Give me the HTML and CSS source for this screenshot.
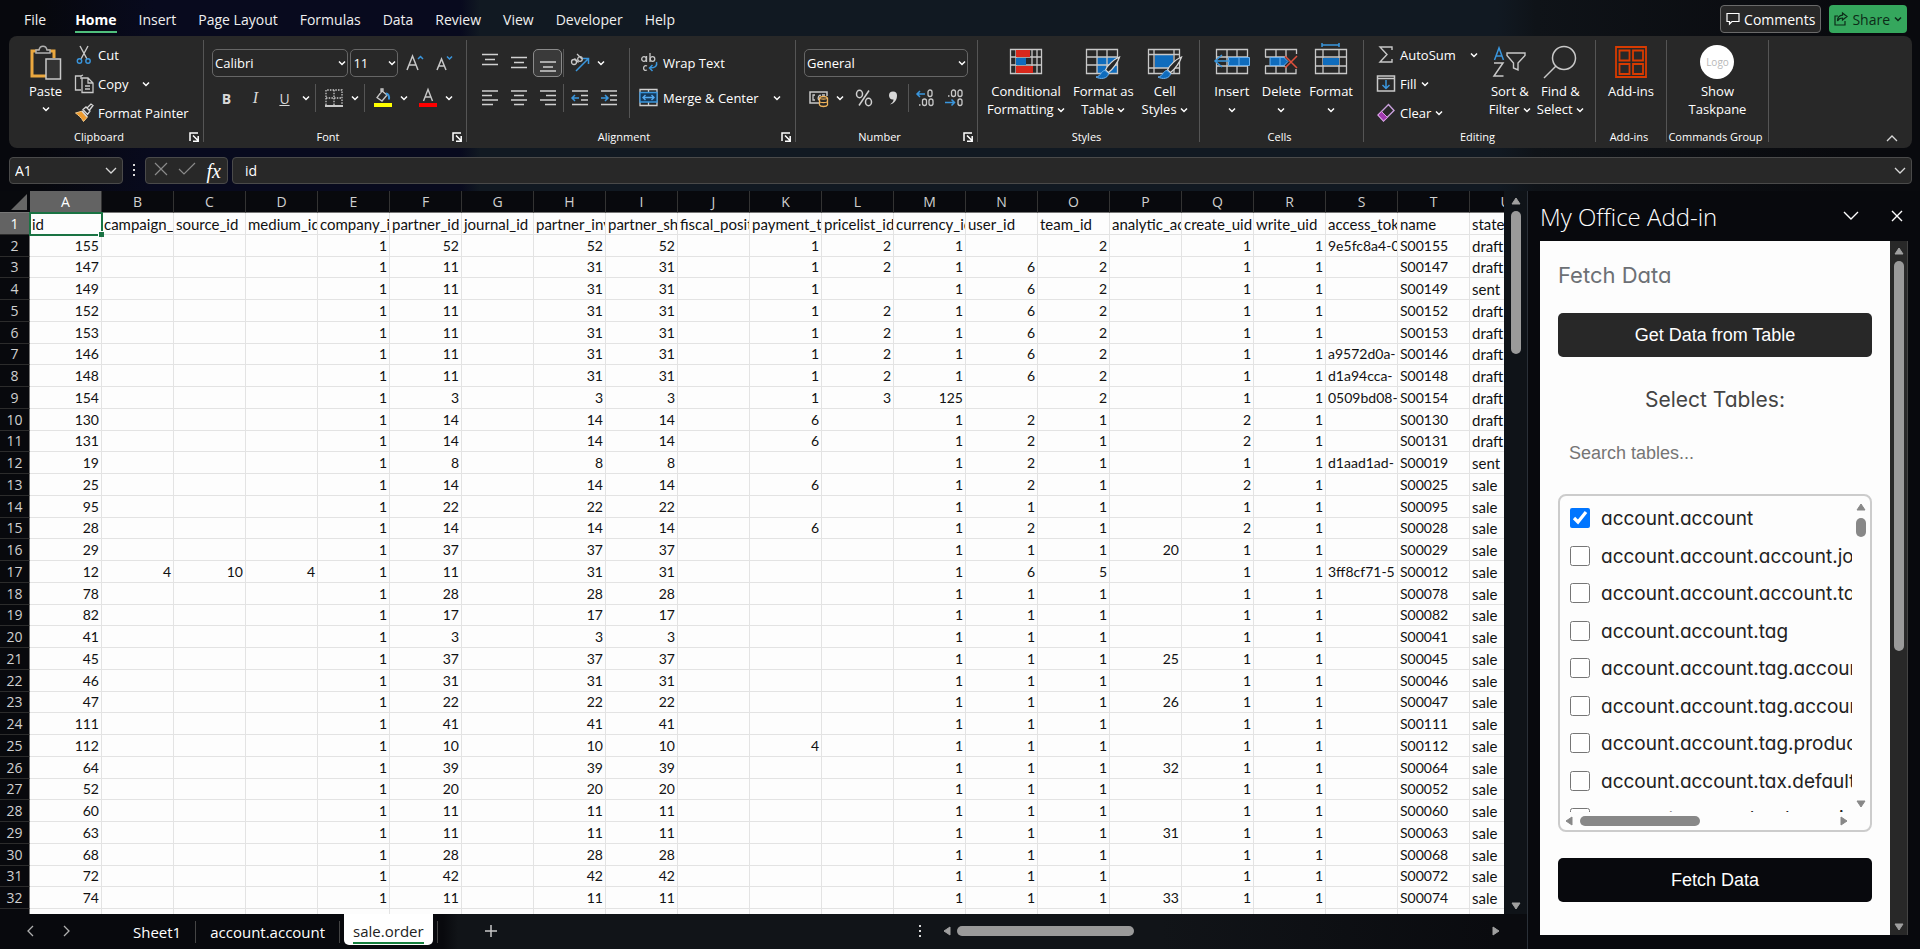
FILE: index.html
```html
<!DOCTYPE html>
<html lang="en">
<head>
    <meta charset="UTF-8">
    <meta name="viewport" content="width=device-width, initial-scale=1.0">
    <title>sale.order</title>
    <link rel="stylesheet" href="styles.css">
</head>
<body>

<svg class="sprite" aria-hidden="true">
    <symbol id="chev" viewBox="0 0 8 8"><path d="M1 2.5l3 3 3-3" fill="none" stroke="currentColor" stroke-width="1.5"/></symbol>
    <symbol id="launch" viewBox="0 0 10 10"><path d="M9 1H1v8M4 3.5l5 5M9.2 4v5.2H4" fill="none" stroke="currentColor" stroke-width="1.5"/></symbol>
    <symbol id="tri" viewBox="0 0 10 8"><path d="M5 1l4 6H1z" fill="currentColor" stroke="currentColor" stroke-linejoin="round"/></symbol>
    <symbol id="brush" viewBox="0 0 26 24">
        <path d="M24.5 1c-5 2-12 8-14 13l3 2.5C18 13 23 6 24.5 1z" fill="#282828" stroke="#d8d8d8" stroke-width="1.3"/>
        <path d="M10 14.5c-4 0-4 6-9 6.5 4 2.5 12 2 12.5-3.5z" fill="#0f6cbd" stroke="#6ab0ee"/>
    </symbol>
</svg>

<header class="menubar">
    <nav class="tabs">
        <a href="#" class="tab tab-file">File</a>
        <a href="#" class="tab active">Home</a>
        <a href="#" class="tab">Insert</a>
        <a href="#" class="tab">Page Layout</a>
        <a href="#" class="tab">Formulas</a>
        <a href="#" class="tab">Data</a>
        <a href="#" class="tab">Review</a>
        <a href="#" class="tab">View</a>
        <a href="#" class="tab">Developer</a>
        <a href="#" class="tab">Help</a>
    </nav>
    <div class="menubar-right">
        <button class="comments">
            <svg width="14" height="14" viewBox="0 0 14 14"><path d="M1 1.5h12v8H6L3.5 12V9.5H1z" fill="none" stroke="#fff" stroke-width="1.2"/></svg>
            Comments
        </button>
        <button class="share">
            <svg width="14" height="14" viewBox="0 0 14 14"><path d="M4 4H1v9h10V9M8.5 1l4.5 3.5L8.5 8V6C6 6 4.5 7 3.5 9c0-3 2-5.5 5-5.8z" fill="none" stroke="#0c2a18" stroke-width="1.2"/></svg>
            Share
            <svg class="chev"><use href="#chev"/></svg>
        </button>
    </div>
</header>

<section class="ribbon">
    <div class="group g-clipboard">
        <div class="group-body">
            <button class="big paste">
                <svg width="32" height="36" viewBox="0 0 32 36">
                    <path d="M9 6H2v25h14M18 6h6v7" fill="none" stroke="#eba83f" stroke-width="3"/>
                    <path d="M6 8V5h3c1-5 7-5 8 0h3v3z" fill="#282828" stroke="#b0b0b0" stroke-width="1.5"/>
                    <rect x="16" y="14" width="14.5" height="20" fill="#333" stroke="#c8c8c8" stroke-width="1.5"/>
                </svg>
                <span>Paste</span>
                <svg class="chev"><use href="#chev"/></svg>
            </button>
            <div class="stack">
                <button class="row-btn">
                    <svg width="20" height="20" viewBox="0 0 20 20"><path d="M6 1l7 13M14 1L7 14" stroke="#c8c8c8" stroke-width="1.4"/><circle cx="5.5" cy="16" r="2.2" fill="none" stroke="#3a96dd" stroke-width="1.4"/><circle cx="14" cy="16" r="2.2" fill="none" stroke="#3a96dd" stroke-width="1.4"/></svg>
                    Cut
                </button>
                <button class="row-btn">
                    <svg width="20" height="20" viewBox="0 0 20 20"><path d="M7 16H1.5V2H7M7 5V2l2-1" fill="none" stroke="#c8c8c8" stroke-width="1.3"/><path d="M8 4h6l5 5v9.5H8zM14 4v5h5M11 12h5M11 15h5" fill="none" stroke="#c8c8c8" stroke-width="1.3"/></svg>
                    Copy
                    <svg class="chev chev-far"><use href="#chev"/></svg>
                </button>
                <button class="row-btn">
                    <svg width="20" height="20" viewBox="0 0 20 20"><path d="M1.5 10l7-2 5 6-4 4.5C7 14 4 12 1.5 10z" fill="#ed9a2d" stroke="#f3c98a"/><path d="M8 8l5 6M9 6.5l3-2.5 4 4-2.5 3.5zM13 5l4-4 2 1.5-3.5 4.5" fill="#282828" stroke="#d8d8d8" stroke-width="1.3"/></svg>
                    Format Painter
                </button>
            </div>
        </div>
        <div class="group-label"><span>Clipboard</span><button class="launch" aria-label="Clipboard settings"><svg width="10" height="10"><use href="#launch"/></svg></button></div>
    </div>

    <div class="group g-font">
        <div class="group-body rows">
            <div class="line">
                <span class="picker font-name"><select aria-label="Font"><option>Calibri</option></select><svg class="chev"><use href="#chev"/></svg></span>
                <span class="picker font-size"><select aria-label="Font size"><option>11</option></select><svg class="chev"><use href="#chev"/></svg></span>
                <button class="tool" aria-label="Increase font size"><svg width="18" height="18" viewBox="0 0 18 18"><path d="M1 16L6.5 2 12 16M3 11h7" fill="none" stroke="#c8c8c8" stroke-width="1.5"/><path d="M12 5l2.5-2.5L17 5" fill="none" stroke="#3a96dd" stroke-width="1.5"/></svg></button>
                <button class="tool" aria-label="Decrease font size"><svg width="18" height="18" viewBox="0 0 18 18"><path d="M2 16L6.5 5 11 16M3.5 12h6" fill="none" stroke="#c8c8c8" stroke-width="1.5"/><path d="M12 2.5L14.5 5 17 2.5" fill="none" stroke="#3a96dd" stroke-width="1.5"/></svg></button>
            </div>
            <div class="line">
                <button class="tool letter"><b>B</b></button>
                <button class="tool letter"><i>I</i></button>
                <button class="tool letter"><u>U</u></button>
                <button class="drop" aria-label="Underline options"><svg class="chev"><use href="#chev"/></svg></button>
                <span class="sep gap"></span>
                <button class="tool" aria-label="Borders"><svg width="18" height="18" viewBox="0 0 18 18"><path d="M1 16V1h16v15M9 1v15M1 9h16" fill="none" stroke="#c8c8c8" stroke-width="1.3" stroke-dasharray="1.5 1.2"/><path d="M0 17h18" stroke="#fff" stroke-width="1.5"/></svg></button>
                <button class="drop" aria-label="Border options"><svg class="chev"><use href="#chev"/></svg></button>
                <span class="sep gap"></span>
                <button class="tool" aria-label="Fill color"><svg width="18" height="18" viewBox="0 0 18 18"><path d="M8 2L3 8.5 8 12l5-6zM7 4V0h2v3" fill="none" stroke="#c8c8c8" stroke-width="1.3"/><path d="M12 4.5c2 0 3.5 2 3 6" fill="none" stroke="#3a96dd" stroke-width="2"/><path d="M0 14h18v4H0z" fill="#ff0"/></svg></button>
                <button class="drop push" aria-label="Fill options"><svg class="chev"><use href="#chev"/></svg></button>
                <button class="tool" aria-label="Font color"><svg width="18" height="18" viewBox="0 0 18 18"><path d="M4.5 12L9 .5 13.5 12M6 8h6" fill="none" stroke="#c8c8c8" stroke-width="1.4"/><path d="M0 14h18v4H0z" fill="#f00"/></svg></button>
                <button class="drop" aria-label="Font color options"><svg class="chev"><use href="#chev"/></svg></button>
            </div>
        </div>
        <div class="group-label"><span>Font</span><button class="launch" aria-label="Font settings"><svg width="10" height="10"><use href="#launch"/></svg></button></div>
    </div>

    <div class="group g-align">
        <div class="group-body">
            <div class="rows">
                <div class="line">
                    <button class="tool" aria-label="Top align"><svg width="18" height="18" viewBox="0 0 18 18"><path d="M1 .5h16M4 5.5h10M1 10.5h16" stroke="#d0d0d0" stroke-width="1.3"/></svg></button>
                    <button class="tool" aria-label="Middle align"><svg width="18" height="18" viewBox="0 0 18 18"><path d="M1 3.5h16M4 8.5h10M1 13.5h16" stroke="#d0d0d0" stroke-width="1.3"/></svg></button>
                    <button class="tool pressed" aria-label="Bottom align"><svg width="18" height="18" viewBox="0 0 18 18"><path d="M1 8h16M4 13h10M1 17h16" stroke="#d0d0d0" stroke-width="1.3"/></svg></button>
                    <span class="sep"></span>
                    <button class="tool" aria-label="Orientation"><svg width="20" height="20" viewBox="0 0 20 20"><g fill="none" stroke="#c8c8c8" stroke-width="1.3"><circle cx="4" cy="9" r="2.5"/><path d="M4.5 5.5l4 4M7 1l5 5"/><circle cx="10" cy="6" r="2.3"/></g><path d="M6 18L18 6M13 5.5h5.5V11" fill="none" stroke="#3a96dd" stroke-width="1.5"/></svg></button>
                    <button class="drop" aria-label="Orientation options"><svg class="chev"><use href="#chev"/></svg></button>
                </div>
                <div class="line">
                    <button class="tool" aria-label="Align left"><svg width="18" height="18" viewBox="0 0 18 18"><path d="M1 2h16M1 6.5h10M1 11h16M1 15.5h11" stroke="#d0d0d0" stroke-width="1.3"/></svg></button>
                    <button class="tool" aria-label="Center"><svg width="18" height="18" viewBox="0 0 18 18"><path d="M1 2h16M4 6.5h10M1 11h16M4 15.5h10" stroke="#d0d0d0" stroke-width="1.3"/></svg></button>
                    <button class="tool" aria-label="Align right"><svg width="18" height="18" viewBox="0 0 18 18"><path d="M1 2h16M7 6.5h10M1 11h16M6 15.5h11" stroke="#d0d0d0" stroke-width="1.3"/></svg></button>
                    <span class="sep"></span>
                    <button class="tool" aria-label="Decrease indent"><svg width="18" height="18" viewBox="0 0 18 18"><path d="M1 2h16M10 6.5h7M10 11h7M1 15.5h16" stroke="#d0d0d0" stroke-width="1.3"/><path d="M8 9H1.5M4 6L1 9l3 3" fill="none" stroke="#3a96dd" stroke-width="1.5"/></svg></button>
                    <button class="tool" aria-label="Increase indent"><svg width="18" height="18" viewBox="0 0 18 18"><path d="M1 2h16M10 6.5h7M10 11h7M1 15.5h16" stroke="#d0d0d0" stroke-width="1.3"/><path d="M1 9h6.5M5 6l3 3-3 3" fill="none" stroke="#3a96dd" stroke-width="1.5"/></svg></button>
                </div>
            </div>
            <span class="sep tall"></span>
            <div class="rows">
                <button class="row-btn wide">
                    <svg width="20" height="20" viewBox="0 0 20 20"><g fill="none" stroke="#c8c8c8" stroke-width="1.3"><circle cx="5" cy="6" r="2.3"/><path d="M7.5 3v6M11 0v9M8 13c-4-2-5 6 0 4"/><circle cx="13.5" cy="6" r="2.3"/></g><path d="M17.5 9c1 4-1 6-7 6M13.5 12l-3 3 3 3" fill="none" stroke="#3a96dd" stroke-width="1.5"/></svg>
                    Wrap Text
                </button>
                <button class="row-btn wide">
                    <svg width="20" height="20" viewBox="0 0 20 20"><path d="M1 1.5h17v16H1zM9.5 1.5v16" fill="none" stroke="#d0d0d0" stroke-width="1.3"/><path d="M1 4.5h17V14H1z" fill="#143a5c" stroke="#3a96dd" stroke-width="1.3"/><path d="M4 9.5h11M6.5 7L4 9.5 6.5 12M12.5 7L15 9.5 12.5 12" fill="none" stroke="#55aaf0" stroke-width="1.4"/></svg>
                    Merge &amp; Center
                    <svg class="chev chev-far"><use href="#chev"/></svg>
                </button>
            </div>
        </div>
        <div class="group-label"><span>Alignment</span><button class="launch" aria-label="Alignment settings"><svg width="10" height="10"><use href="#launch"/></svg></button></div>
    </div>

    <div class="group g-number">
        <div class="group-body rows">
            <div class="line">
                <span class="picker number-format"><select aria-label="Number format"><option>General</option></select><svg class="chev"><use href="#chev"/></svg></span>
            </div>
            <div class="line">
                <button class="tool" aria-label="Accounting format"><svg width="20" height="18" viewBox="0 0 20 18"><path d="M10 14H1V3h17v4" fill="none" stroke="#c8c8c8" stroke-width="1.5"/><path d="M6 6H4v5h2M12 6.5c-3-1.500-4 5.500-1 4.500M13 6h3" fill="none" stroke="#c8c8c8" stroke-width="1.3"/><path d="M10.5 9v7c1 2 7 2 8 0V9c-1-2-7-2-8 0zM10.5 9c1 1.5 7 1.5 8 0M10.5 12.5c1 1.5 7 1.5 8 0" fill="#282828" stroke="#f0b45c" stroke-width="1.3"/></svg></button>
                <button class="drop push" aria-label="Accounting options"><svg class="chev"><use href="#chev"/></svg></button>
                <button class="tool" aria-label="Percent style"><svg width="18" height="18" viewBox="0 0 18 18"><g fill="none" stroke="#d0d0d0" stroke-width="1.5"><ellipse cx="4.5" cy="5" rx="3" ry="3.7"/><ellipse cx="13.5" cy="13" rx="3" ry="3.7"/><path d="M14 1.5L4 16.5"/></g></svg></button>
                <button class="tool" aria-label="Comma style"><svg width="18" height="18" viewBox="0 0 18 18"><path d="M5 6.5a4 4 0 1 1 8 0c0 5-3 8-7 9 2-1.500 3.500-3 3.500-5C7 11 5 9 5 6.500z" fill="#d8d8d8"/></svg></button>
                <span class="sep"></span>
                <button class="tool" aria-label="Increase decimal"><svg width="20" height="20" viewBox="0 0 20 20"><g fill="none" stroke="#c8c8c8" stroke-width="1.3"><rect x="13" y="2" width="4" height="6.5" rx="2"/><rect x="7.5" y="11" width="4" height="6.5" rx="2"/><rect x="14" y="11" width="4" height="6.5" rx="2"/></g><path d="M4 17h1.5" stroke="#c8c8c8" stroke-width="1.5"/><path d="M10 6H2M5 3L2 6l3 3" fill="none" stroke="#3a96dd" stroke-width="1.5"/></svg></button>
                <button class="tool" aria-label="Decrease decimal"><svg width="20" height="20" viewBox="0 0 20 20"><g fill="none" stroke="#c8c8c8" stroke-width="1.3"><rect x="7.5" y="2" width="4" height="6.5" rx="2"/><rect x="14" y="2" width="4" height="6.5" rx="2"/><rect x="14" y="11" width="4" height="6.5" rx="2"/></g><path d="M4 8h1.5" stroke="#c8c8c8" stroke-width="1.5"/><path d="M1 14.5h9M7.5 11.5l3 3-3 3" fill="none" stroke="#3a96dd" stroke-width="1.5"/></svg></button>
            </div>
        </div>
        <div class="group-label"><span>Number</span><button class="launch" aria-label="Number settings"><svg width="10" height="10"><use href="#launch"/></svg></button></div>
    </div>

    <div class="group g-styles">
        <div class="group-body">
            <button class="big">
                <svg width="36" height="36" viewBox="0 0 36 36"><path d="M2.5 4.5h31v24h-31zM8 4v25M24 4v25M29 4v25M2 12h32M2 20h32" fill="none" stroke="#c8c8c8" stroke-width="1.3"/><path d="M8 5h14v7H8zM8 21h17v7H8z" fill="#d8281c"/><path d="M8 13h10v7H8z" fill="#0f6cbd"/></svg>
                <span>Conditional<br>Formatting <svg class="chev"><use href="#chev"/></svg></span>
            </button>
            <button class="big">
                <svg width="36" height="36" viewBox="0 0 36 36"><path d="M12 12h20v16H12z" fill="#0f6cbd"/><path d="M1.5 4.5h31v24h-31zM12 4v25M22 4v25M1 12h32M1 20h32" fill="none" stroke="#c8c8c8" stroke-width="1.3"/><use href="#brush" x="10" y="11" width="26" height="24"/></svg>
                <span>Format as<br>Table <svg class="chev"><use href="#chev"/></svg></span>
            </button>
            <button class="big">
                <svg width="36" height="36" viewBox="0 0 36 36"><path d="M8 10h18v13H8z" fill="#0f6cbd"/><path d="M1.5 4.5h31v24h-31zM7 4v25M27 4v25M1 9.5h32M1 23h32" fill="none" stroke="#c8c8c8" stroke-width="1.3"/><use href="#brush" x="10" y="11" width="26" height="24"/></svg>
                <span>Cell<br>Styles <svg class="chev"><use href="#chev"/></svg></span>
            </button>
        </div>
        <div class="group-label"><span>Styles</span></div>
    </div>

    <div class="group g-cells">
        <div class="group-body">
            <button class="big">
                <svg width="36" height="36" viewBox="0 0 36 36"><path d="M2.5 4.5h31v24h-31zM13 4v25M23 4v25M2 12h32M2 21h32" fill="none" stroke="#c8c8c8" stroke-width="1.3"/><path d="M14.5 12.5h21v8h-21zM25 12v8" fill="#0f6cbd" stroke="#6ab0ee"/><path d="M16 16H1M8 10l-7 6 7 6" fill="none" stroke="#3a96dd" stroke-width="1.5"/></svg>
                <span>Insert<br><svg class="chev"><use href="#chev"/></svg></span>
            </button>
            <button class="big">
                <svg width="36" height="36" viewBox="0 0 36 36"><path d="M2.5 12V4.5h31V9M33 24v4.5H2.5V21M13 4v8M23 4v8M13 21v8M23 21v8M2 12h20M2 21h20" fill="none" stroke="#c8c8c8" stroke-width="1.3"/><path d="M7 12.5h14l4 4-4 4H7zM17 12v8" fill="#0f6cbd" stroke="#6ab0ee"/><path d="M22 11l12 12M34 11L22 23" stroke="#e0503c" stroke-width="1.5"/></svg>
                <span>Delete<br><svg class="chev"><use href="#chev"/></svg></span>
            </button>
            <button class="big">
                <svg width="36" height="36" viewBox="0 0 36 36"><path d="M2.5 4.5h31v24h-31zM10 4v25M26 4v25M2 12h32M2 21h32" fill="none" stroke="#c8c8c8" stroke-width="1.3"/><path d="M10 13h16v7H10z" fill="#0f6cbd"/><path d="M9 0h17M9-2v4M26-2v4" stroke="#3a96dd" stroke-width="1.5"/></svg>
                <span>Format<br><svg class="chev"><use href="#chev"/></svg></span>
            </button>
        </div>
        <div class="group-label"><span>Cells</span></div>
    </div>

    <div class="group g-editing">
        <div class="group-body">
            <div class="stack">
                <button class="row-btn">
                    <svg width="20" height="20" viewBox="0 0 20 20"><path d="M16 5V2H4l7 7.5L4 17h12v-3" fill="none" stroke="#c8c8c8" stroke-width="1.4"/></svg>
                    AutoSum
                    <svg class="chev chev-far"><use href="#chev"/></svg>
                </button>
                <button class="row-btn">
                    <svg width="20" height="20" viewBox="0 0 20 20"><path d="M1.5 2h17v15h-17zM1.5 4.5h17" fill="none" stroke="#c8c8c8" stroke-width="1.5"/><path d="M10 6v8.5M6.5 11l3.5 3.5 3.5-3.5" fill="none" stroke="#3a96dd" stroke-width="1.5"/></svg>
                    Fill
                    <svg class="chev"><use href="#chev"/></svg>
                </button>
                <button class="row-btn">
                    <svg width="20" height="20" viewBox="0 0 20 20"><path d="M2 12L12.5 1.5l5.5 6L7.5 18z" fill="none" stroke="#c9a0dc" stroke-width="1.4"/><path d="M2 12l3.5-3.5 6 6L7.5 18z" fill="#a23bb0" stroke="#d9a0e0"/></svg>
                    Clear
                    <svg class="chev"><use href="#chev"/></svg>
                </button>
            </div>
            <button class="big">
                <svg width="36" height="36" viewBox="0 0 36 36"><path d="M2.5 15L7 3l4.500 12M4 11h6" fill="none" stroke="#3a96dd" stroke-width="1.5"/><path d="M2 18h9L2 31h9.5" fill="none" stroke="#c8c8c8" stroke-width="1.5"/><path d="M15 8h18v2.5L26 18v7l-4.500-2v-5L15 10.500z" fill="none" stroke="#c8c8c8" stroke-width="1.4"/></svg>
                <span>Sort &amp;<br>Filter <svg class="chev"><use href="#chev"/></svg></span>
            </button>
            <button class="big">
                <svg width="36" height="36" viewBox="0 0 36 36"><circle cx="22" cy="13" r="11.5" fill="none" stroke="#c8c8c8" stroke-width="1.5"/><path d="M14 21L2 33" stroke="#c8c8c8" stroke-width="1.5"/></svg>
                <span>Find &amp;<br>Select <svg class="chev"><use href="#chev"/></svg></span>
            </button>
        </div>
        <div class="group-label"><span>Editing</span></div>
    </div>

    <div class="group g-addins">
        <div class="group-body">
            <button class="big">
                <svg width="36" height="36" viewBox="0 0 36 36"><path d="M3 2h30v30H3z" fill="none" stroke="#d83b01" stroke-width="1.8"/><path d="M6.5 5.5h10v10h-10zM20 5.5h10v10H20zM6.5 19h10v10h-10zM20 19h10v10H20z" fill="none" stroke="#d83b01" stroke-width="1.8"/></svg>
                <span>Add-ins</span>
            </button>
        </div>
        <div class="group-label"><span>Add-ins</span></div>
    </div>

    <div class="group g-commands">
        <div class="group-body">
            <button class="big">
                <span class="logo">Logo</span>
                <span>Show<br>Taskpane</span>
            </button>
        </div>
        <div class="group-label"><span>Commands Group</span></div>
    </div>

    <button class="collapse" aria-label="Collapse ribbon"><svg width="12" height="8" viewBox="0 0 12 8"><path d="M1 7l5-5 5 5" fill="none" stroke="#d8d8d8" stroke-width="1.3"/></svg></button>
</section>

<section class="formula-bar">
    <div class="box name-box">
        <input type="text" value="A1" aria-label="Name box">
        <svg width="12" height="8" viewBox="0 0 12 8"><path d="M1 1l5 5 5-5" fill="none" stroke="#d8d8d8" stroke-width="1.3"/></svg>
    </div>
    <svg class="dots" width="4" height="14" viewBox="0 0 4 14"><path d="M1 1h2v2H1zM1 6h2v2H1zM1 11h2v2H1z" fill="#d8d8d8"/></svg>
    <div class="box fx-box">
        <button aria-label="Cancel"><svg width="14" height="14" viewBox="0 0 14 14"><path d="M1 1l12 12M13 1L1 13" stroke="#8a8a8a" stroke-width="1.2"/></svg></button>
        <button aria-label="Enter"><svg width="18" height="14" viewBox="0 0 18 14"><path d="M1 7l5 5L17 1" fill="none" stroke="#8a8a8a" stroke-width="1.2"/></svg></button>
        <button class="fx">fx</button>
    </div>
    <div class="box formula">
        <input type="text" value="id" aria-label="Formula">
        <svg width="12" height="8" viewBox="0 0 12 8"><path d="M1 1l5 5 5-5" fill="none" stroke="#d8d8d8" stroke-width="1.3"/></svg>
    </div>
</section>

<main class="workspace">
    <section class="book">
        <div class="grid-area">
            <div class="grid">
                <table id="sheet"></table>
                <span class="selection"></span>
            </div>
            <div class="scroll-v">
                <svg class="arrow"><use href="#tri"/></svg>
                <span class="thumb"></span>
                <svg class="arrow down"><use href="#tri"/></svg>
            </div>
        </div>
        <footer class="sheet-bar">
            <button class="nav" aria-label="Previous sheet"><svg width="8" height="12" viewBox="0 0 8 12"><path d="M7 1L2 6l5 5" fill="none" stroke="#b0b0b0" stroke-width="1.3"/></svg></button>
            <button class="nav" aria-label="Next sheet"><svg width="8" height="12" viewBox="0 0 8 12"><path d="M1 1l5 5-5 5" fill="none" stroke="#b0b0b0" stroke-width="1.3"/></svg></button>
            <button class="sheet-tab first">Sheet1</button>
            <button class="sheet-tab">account.account</button>
            <button class="sheet-tab current"><span>sale.order</span></button>
            <span class="tab-end"></span>
            <button class="add" aria-label="New sheet"><svg width="14" height="14" viewBox="0 0 14 14"><path d="M7 1v12M1 7h12" stroke="#c8c8c8" stroke-width="1.5"/></svg></button>
            <div class="scroll-h">
                <svg class="dots" width="4" height="14" viewBox="0 0 4 14"><path d="M1 1h2v2H1zM1 6h2v2H1zM1 11h2v2H1z" fill="#d8d8d8"/></svg>
                <svg class="arrow left"><use href="#tri"/></svg>
                <span class="thumb"></span>
                <svg class="arrow right"><use href="#tri"/></svg>
            </div>
        </footer>
    </section>

    <aside class="taskpane">
        <div class="pane-head">
            <h1>My Office Add-in</h1>
            <button aria-label="Options"><svg width="16" height="10" viewBox="0 0 16 10"><path d="M1 1l7 7 7-7" fill="none" stroke="#fff" stroke-width="1.4"/></svg></button>
            <button aria-label="Close"><svg width="12" height="12" viewBox="0 0 12 12"><path d="M1 1l10 10M11 1L1 11" stroke="#fff" stroke-width="1.4"/></svg></button>
        </div>
        <div class="pane-frame">
            <div class="pane-body">
                <h2>Fetch Data</h2>
                <button class="action">Get Data from Table</button>
                <h3 id="pick-title">Select Tables:</h3>
                <input class="search" type="text" placeholder="Search tables..." aria-label="Search tables">
                <div class="table-list">
                    <div class="list-view">
                        <ul aria-labelledby="pick-title">
                            <li><label><input type="checkbox" checked>account.account</label></li>
                            <li><label><input type="checkbox">account.account.account.journal.rel</label></li>
                            <li><label><input type="checkbox">account.account.account.tag</label></li>
                            <li><label><input type="checkbox">account.account.tag</label></li>
                            <li><label><input type="checkbox">account.account.tag.account.move.line.rel</label></li>
                            <li><label><input type="checkbox">account.account.tag.account.tax.rel</label></li>
                            <li><label><input type="checkbox">account.account.tag.product.template.rel</label></li>
                            <li><label><input type="checkbox">account.account.tax.default.rel</label></li>
                            <li><label><input type="checkbox">account.accrued.orders.wizard</label></li>
                        </ul>
                        <div class="list-scroll-v">
                            <svg class="arrow"><use href="#tri"/></svg>
                            <span class="thumb"></span>
                            <svg class="arrow down"><use href="#tri"/></svg>
                        </div>
                    </div>
                    <div class="list-scroll-h">
                        <svg class="arrow left"><use href="#tri"/></svg>
                        <span class="thumb"></span>
                        <svg class="arrow right"><use href="#tri"/></svg>
                    </div>
                </div>
                <button class="action dark">Fetch Data</button>
            </div>
            <div class="pane-scroll">
                <svg class="arrow"><use href="#tri"/></svg>
                <span class="thumb"></span>
                <svg class="arrow down"><use href="#tri"/></svg>
            </div>
        </div>
    </aside>
</main>

<script src="script.js"></script>
</body>
</html>
```

FILE: styles.css
```css
* {
    box-sizing: border-box;
}

body {
    margin: 0;
    height: 100vh;
    display: flex;
    flex-direction: column;
    overflow: hidden;
    font-family: "Open Sans", "Noto Sans", sans-serif;
    font-size: 13px;
    color: #fff;
    background: linear-gradient(to right, #07080d 2%, #080a1e 8%, #080a1e 24%, #111922 25%, #111922 78%, #0f1318 80%, #090a0e 96%);
}

button, input, select {
    font: inherit;
    color: inherit;
    background: none;
    border: none;
    padding: 0;
    margin: 0;
}

button {
    cursor: pointer;
    white-space: nowrap;
}

svg {
    flex: none;
    overflow: visible;
}

.sprite {
    display: none;
}

.chev {
    width: 8px;
    height: 8px;
}

/* Menu bar */
.menubar {
    display: flex;
    justify-content: space-between;
    height: 36px;
    padding: 0 13px 0 24px;
}

.tabs {
    display: flex;
    gap: 22px;
    font-size: 14px;
}

.tab {
    color: #f0f0f0;
    text-decoration: none;
    line-height: 20px;
    height: 23px;
    margin-top: 10px;
}

.tab-file {
    margin-right: 7px;
}

.tab.active {
    font-weight: 700;
    color: #fff;
    border-bottom: 2px solid #4fbf7d;
}

.menubar-right {
    display: flex;
    gap: 8px;
    padding-top: 5px;
    font-size: 14px;
}

.menubar-right button {
    display: flex;
    align-items: center;
    gap: 4px;
    height: 28px;
    padding: 0 5px;
    border-radius: 4px;
}

.comments {
    background: #282828;
    border: 1px solid #6a6a6a;
}

.menubar-right .share {
    background: #35a75d;
    color: #0c2a18;
}

/* Ribbon */
.ribbon {
    display: flex;
    height: 112px;
    margin: 0 8px 0 9px;
    padding: 4px 0 6px;
    background: #282828;
    border-radius: 8px;
}

.group {
    display: flex;
    flex-direction: column;
    flex: none;
    border-right: 1px solid #555;
}

.g-clipboard { width: 195px; }
.g-font { width: 263px; }
.g-align { width: 329px; }
.g-number { width: 182px; }
.g-styles { width: 222px; }
.g-cells { width: 164px; }
.g-editing { width: 232px; }
.g-addins { width: 71px; }
.g-commands { width: 102px; }

.group-body {
    display: flex;
    flex: 1;
    padding: 0 8px;
}

.g-clipboard .group-body {
    padding-left: 12px;
}

.g-styles .group-body {
    padding: 0 8px 0 6px;
    justify-content: space-between;
}

.g-cells .group-body {
    padding: 0 7px;
}

.g-cells .big {
    flex: 1;
}

.g-editing .group-body {
    padding-left: 12px;
}

.g-editing .stack {
    flex: 1;
}

.g-addins .group-body,
.g-commands .group-body {
    justify-content: center;
    padding: 0;
}

.group-label {
    display: flex;
    align-items: center;
    height: 10px;
    padding-right: 4px;
    font-size: 11px;
    line-height: 10px;
    text-align: center;
    white-space: nowrap;
}

.group-label span {
    flex: 1;
}

.launch {
    display: flex;
}

.big {
    display: flex;
    flex-direction: column;
    align-items: center;
    padding: 5px 3px 0;
    line-height: 18px;
}

.big > svg:first-child {
    margin-bottom: 1px;
}

.paste {
    width: 49px;
    margin-right: 4px;
}

.paste .chev {
    margin-top: 5px;
}

.logo {
    width: 34px;
    height: 34px;
    margin-bottom: 3px;
    border-radius: 50%;
    background: #fff;
    color: #b8b8b8;
    font-size: 10px;
    line-height: 34px;
}

.stack {
    display: flex;
    flex-direction: column;
}

.row-btn {
    display: flex;
    align-items: center;
    gap: 4px;
    height: 29px;
}

.row-btn.wide {
    height: 28px;
}

.chev-far {
    margin-left: 10px;
}

.rows {
    display: flex;
    flex-direction: column;
    gap: 7px;
}

.group-body > .rows,
.group-body.rows {
    padding-top: 9px;
}

.line {
    display: flex;
    align-items: center;
    height: 28px;
}

.tool {
    display: flex;
    align-items: center;
    justify-content: center;
    width: 29px;
    height: 28px;
}

.tool.letter {
    font-size: 14px;
    color: #d8d8d8;
}

.letter i {
    font-family: "Liberation Serif", serif;
    font-size: 16px;
}

.tool.pressed {
    background: #3a3a3a;
    border: 1px solid #8a8a8a;
    border-radius: 5px;
}

.drop {
    display: flex;
    justify-content: center;
    width: 13px;
}

.drop.push {
    margin-right: 3px;
}

.sep {
    width: 1px;
    height: 28px;
    margin: 0 1px;
    background: #555;
}

.sep.gap {
    margin: 0 3px;
}

.sep.tall {
    height: 70px;
    margin: 8px 9px 0 6px;
}

.picker {
    position: relative;
    display: flex;
}

.picker select {
    appearance: none;
    width: 100%;
    height: 28px;
    padding: 0 2px;
    border: 1px solid #666;
    border-radius: 5px;
}

.picker .chev {
    position: absolute;
    right: 2px;
    top: 10px;
    pointer-events: none;
}

.font-name {
    width: 137px;
    margin-right: 2px;
}

.font-size {
    width: 48px;
    margin-right: 2px;
}

.number-format {
    width: 164px;
}

.collapse {
    margin: auto 14px 0 auto;
    display: flex;
}

/* Formula bar */
.formula-bar {
    display: flex;
    height: 43px;
    padding: 9px 8px 7px 9px;
    font-size: 14px;
}

.box {
    display: flex;
    align-items: center;
    padding: 0 5px;
    background: #282828;
    border: 1px solid #4a4a4a;
    border-radius: 4px;
}

.box input {
    flex: 1;
    min-width: 0;
    outline: none;
}

.name-box {
    width: 114px;
}

.formula-bar .dots {
    margin: 6px 9px;
}

.fx-box {
    width: 83px;
    margin-right: 4px;
    padding: 0 6px 0 8px;
    justify-content: space-between;
}

.fx {
    font-family: "Liberation Serif", serif;
    font-style: italic;
    font-size: 20px;
    line-height: 20px;
}

.formula {
    flex: 1;
    padding-left: 12px;
}

/* Sheet */
.workspace {
    display: flex;
    flex: 1;
    min-height: 0;
}

.book {
    display: flex;
    flex-direction: column;
    flex: 1;
    min-width: 0;
}

.grid-area {
    display: flex;
    flex: 1;
    min-height: 0;
    background: #0f1318;
}

.grid {
    position: relative;
    flex: 1;
    overflow: hidden;
    background: #fdfdfd;
}

#sheet {
    width: 1542px;
    table-layout: fixed;
    border-spacing: 0;
    font-family: Lato, sans-serif;
    font-size: 14px;
    color: #111;
}

#sheet th {
    padding: 0;
    font-family: "Open Sans", sans-serif;
    font-weight: 400;
    color: #d0d0d0;
    background: #08090d;
}

#sheet thead th {
    width: 72px;
    height: 22px;
    line-height: 21px;
    border-right: 1px solid #333;
    border-bottom: 1px solid #777;
}

#sheet thead .corner {
    width: 30px;
    border-right-color: #08090d;
}

.corner svg {
    display: block;
    margin: 0 0 0 auto;
}

#sheet tbody th {
    border-bottom: 1px solid #2c2c2c;
    border-right: 1px solid #777;
}

#sheet .picked {
    background: #636363;
    color: #fff;
}

#sheet tbody tr {
    height: 22px;
}

#sheet tbody tr:nth-child(4n+3) {
    height: 21px;
}

#sheet tbody th,
#sheet td {
    line-height: 20px;
}

#sheet td {
    padding: 0 2px;
    overflow: hidden;
    white-space: nowrap;
    border-right: 1px solid #e3e3e3;
    border-bottom: 1px solid #e3e3e3;
}

#sheet td.word {
    font-size: 15px;
}

#sheet td.num {
    text-align: right;
}

.selection {
    position: absolute;
    left: 29px;
    top: 21px;
    width: 74px;
    height: 24px;
    border: 2px solid #1a7343;
}

.selection::after {
    content: "";
    position: absolute;
    right: -3px;
    bottom: -3px;
    width: 5px;
    height: 5px;
    background: #1a7343;
    border-left: 1px solid #fff;
    border-top: 1px solid #fff;
}

/* Scroll bars */
.arrow {
    width: 10px;
    height: 8px;
    color: #a0a0a0;
}

.arrow.down { transform: rotate(180deg); }
.arrow.left { transform: rotate(-90deg); }
.arrow.right { transform: rotate(90deg); }

.thumb {
    background: #9a9a9a;
    border-radius: 5px;
}

.scroll-v {
    display: flex;
    flex-direction: column;
    align-items: center;
    width: 23px;
    padding: 6px 0 4px;
}

.scroll-v .thumb {
    width: 10px;
    height: 20%;
    margin: 6px 0 auto;
}

.sheet-bar {
    display: flex;
    align-items: flex-start;
    height: 35px;
    padding-left: 16px;
    background: linear-gradient(to right, #08090d 29%, #111418 30%, #111418 76%, #0a0b0f 98%);
    font-size: 15px;
}

.nav {
    width: 27px;
    height: 34px;
    margin-right: 10px;
}

.sheet-tab {
    height: 22px;
    margin-top: 7px;
    padding: 0 14px;
    line-height: 22px;
    border-right: 1px solid #444;
}

.sheet-tab.first {
    margin-left: 29px;
}

.sheet-tab.current {
    height: 31px;
    margin: 0 4px;
    padding: 4px 9px 0;
    color: #222;
    background: #fff;
    border: none;
    border-radius: 0 0 5px 5px;
}

.current span {
    display: block;
    border-bottom: 2px solid #15803d;
}

.tab-end {
    width: 1px;
    height: 22px;
    margin-top: 7px;
    background: #444;
}

.add {
    display: flex;
    margin: 10px 0 0 46px;
}

.scroll-h {
    display: flex;
    align-items: center;
    width: 583px;
    height: 34px;
    margin: 0 26px 0 auto;
}

.scroll-h .dots {
    margin-right: 20px;
}

.scroll-h .thumb {
    width: 177px;
    height: 10px;
    margin: 0 auto 0 5px;
}

/* Task pane */
.taskpane {
    display: flex;
    flex-direction: column;
    width: 393px;
    padding: 0 12px 14px;
    background: #08090d;
    border-left: 1px solid #2a3038;
}

.pane-head {
    display: flex;
    align-items: center;
    height: 50px;
    padding-right: 5px;
}

.pane-head h1 {
    flex: 1;
    margin: 0;
    font-size: 24px;
    font-weight: 300;
}

.pane-head button {
    display: flex;
    margin-left: 32px;
}

.pane-frame {
    display: flex;
    flex: 1;
    min-height: 0;
}

.pane-body {
    display: flex;
    flex-direction: column;
    flex: 1;
    min-width: 0;
    padding: 18px;
    background: #fdfdfd;
    color: #222;
    font-family: Inter, sans-serif;
    font-feature-settings: "cv11";
}

.pane-body h2,
.pane-body h3 {
    margin: 0;
    font-size: 22px;
    line-height: 32px;
    font-weight: 400;
    color: #6c7075;
}

.pane-body h3 {
    margin: 27px 0 15px;
    font-size: 21px;
    text-align: center;
    color: #444;
}

.action {
    height: 44px;
    margin-top: 22px;
    border-radius: 5px;
    background: #282828;
    color: #fff;
    font-family: "Liberation Sans", Arial, sans-serif;
    font-size: 18px;
    flex: none;
}

.action.dark {
    margin-top: 26px;
    background: #08090d;
}

.search {
    height: 44px;
    padding: 0 11px;
    font-family: "Liberation Sans", Arial, sans-serif;
    font-size: 18px;
}

.search::placeholder {
    color: #757575;
}

.table-list {
    height: 338px;
    margin-top: 19px;
    padding: 3px 1px 0 10px;
    border: 2px solid #ccc;
    border-radius: 8px;
}

.list-view {
    display: flex;
    height: 313px;
}

.table-list ul {
    flex: 1;
    min-width: 0;
    margin: 0;
    padding: 0;
    overflow: hidden;
    list-style: none;
}

.table-list li {
    height: 37px;
}

.table-list li:nth-child(odd) {
    height: 38px;
}

.table-list label {
    display: flex;
    align-items: center;
    gap: 11px;
    height: 38px;
    font-size: 19px;
    white-space: nowrap;
}

.table-list input {
    flex: none;
    width: 20px;
    height: 20px;
}

.list-scroll-v {
    display: flex;
    flex-direction: column;
    align-items: center;
    width: 17px;
    padding: 4px 0 4px;
}

.list-scroll-v .thumb {
    width: 10px;
    height: 19px;
    margin: 7px 0 auto;
}

.list-scroll-h {
    display: flex;
    align-items: center;
    height: 18px;
    margin: 0 20px 0 -6px;
}

.list-scroll-h .thumb {
    width: 120px;
    height: 10px;
    margin: 0 auto 0 6px;
}

.table-list .arrow {
    color: #888;
}

.table-list .thumb {
    background: #888;
}

.pane-scroll {
    display: flex;
    flex-direction: column;
    align-items: center;
    width: 18px;
    padding: 6px 0 4px;
    background: #282828;
    border-right: 1px solid #444;
}

.pane-scroll .thumb {
    width: 10px;
    height: 57%;
    margin: 6px 0 auto;
}
```

FILE: script.js
```js
const fields = ["id", "campaign_id", "source_id", "medium_id", "company_id", "partner_id", "journal_id",
    "partner_invoice_id", "partner_shipping_id", "fiscal_position_id", "payment_term_id", "pricelist_id",
    "currency_id", "user_id", "team_id", "analytic_account_id", "create_uid", "write_uid", "access_token",
    "name", "state"];

// One sale order per line, same column order as fields
const orders = `
155,,,,1,52,,52,52,,1,2,1,,2,,1,1,9e5fc8a4-0,S00155,draft
147,,,,1,11,,31,31,,1,2,1,6,2,,1,1,,S00147,draft
149,,,,1,11,,31,31,,1,,1,6,2,,1,1,,S00149,sent
152,,,,1,11,,31,31,,1,2,1,6,2,,1,1,,S00152,draft
153,,,,1,11,,31,31,,1,2,1,6,2,,1,1,,S00153,draft
146,,,,1,11,,31,31,,1,2,1,6,2,,1,1,a9572d0a-,S00146,draft
148,,,,1,11,,31,31,,1,2,1,6,2,,1,1,d1a94cca-,S00148,draft
154,,,,1,3,,3,3,,1,3,125,,2,,1,1,0509bd08-,S00154,draft
130,,,,1,14,,14,14,,6,,1,2,1,,2,1,,S00130,draft
131,,,,1,14,,14,14,,6,,1,2,1,,2,1,,S00131,draft
19,,,,1,8,,8,8,,,,1,2,1,,1,1,d1aad1ad-,S00019,sent
25,,,,1,14,,14,14,,6,,1,2,1,,2,1,,S00025,sale
95,,,,1,22,,22,22,,,,1,1,1,,1,1,,S00095,sale
28,,,,1,14,,14,14,,6,,1,2,1,,2,1,,S00028,sale
29,,,,1,37,,37,37,,,,1,1,1,20,1,1,,S00029,sale
12,4,10,4,1,11,,31,31,,,,1,6,5,,1,1,3ff8cf71-5,S00012,sale
78,,,,1,28,,28,28,,,,1,1,1,,1,1,,S00078,sale
82,,,,1,17,,17,17,,,,1,1,1,,1,1,,S00082,sale
41,,,,1,3,,3,3,,,,1,1,1,,1,1,,S00041,sale
45,,,,1,37,,37,37,,,,1,1,1,25,1,1,,S00045,sale
46,,,,1,31,,31,31,,,,1,1,1,,1,1,,S00046,sale
47,,,,1,22,,22,22,,,,1,1,1,26,1,1,,S00047,sale
111,,,,1,41,,41,41,,,,1,1,1,,1,1,,S00111,sale
112,,,,1,10,,10,10,,4,,1,1,1,,1,1,,S00112,sale
64,,,,1,39,,39,39,,,,1,1,1,32,1,1,,S00064,sale
52,,,,1,20,,20,20,,,,1,1,1,,1,1,,S00052,sale
60,,,,1,11,,11,11,,,,1,1,1,,1,1,,S00060,sale
63,,,,1,11,,11,11,,,,1,1,1,31,1,1,,S00063,sale
68,,,,1,28,,28,28,,,,1,1,1,,1,1,,S00068,sale
72,,,,1,42,,42,42,,,,1,1,1,,1,1,,S00072,sale
74,,,,1,11,,11,11,,,,1,1,1,33,1,1,,S00074,sale
`.trim().split("\n").map(line => line.split(","));

function cellClass(value) {
    if (value === "") return "";
    if (!isNaN(value)) return "num";
    return /\d/.test(value) ? "code" : "word";
}

function renderSheet() {
    const rows = [fields, ...orders, fields.map(() => "")];

    let html = `<thead><tr><th class="corner"><svg width="18" height="18" viewBox="0 0 18 18"><path d="M16 1v16H0z" fill="#666"/></svg></th>`;
    fields.forEach((field, i) => {
        html += `<th class="${i === 0 ? "picked" : ""}">${String.fromCharCode(65 + i)}</th>`;
    });
    html += "</tr></thead><tbody>";

    rows.forEach((row, r) => {
        html += `<tr><th class="${r === 0 ? "picked" : ""}">${r < 32 ? r + 1 : ""}</th>`;
        row.forEach(value => {
            html += `<td class="${cellClass(value)}">${value}</td>`;
        });
        html += "</tr>";
    });

    document.getElementById("sheet").innerHTML = html + "</tbody>";
}

renderSheet();
```
